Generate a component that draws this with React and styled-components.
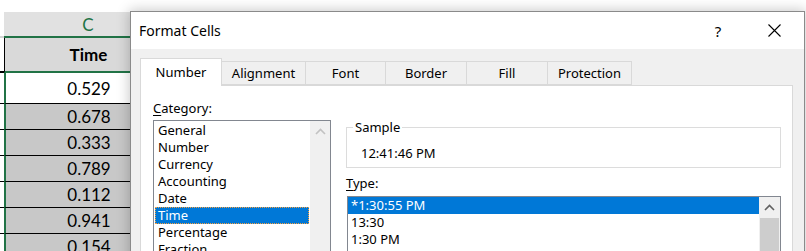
import React from 'react';
import styled, { createGlobalStyle } from 'styled-components';

const GlobalStyle = createGlobalStyle`
  html, body {
    margin: 0;
    padding: 0;
    background: #fff;
    overflow: hidden;
  }
`;

const UI_FONT = `"Noto Sans", "Open Sans", sans-serif`;
const SHEET_FONT = `Lato, "Open Sans", sans-serif`;
const GREEN = '#217346';

// Whole window: sheet on the left, dialog over the rest
const Screen = styled.div`
  display: flex;
  align-items: flex-start;
  width: 806px;
  height: 251px;
  overflow: hidden;
`;

//// Spreadsheet part
const Sheet = styled.div`
  width: 130px;
  flex-shrink: 0;
  overflow: hidden;
  padding-top: 12px;
`;

const SheetRow = styled.div`
  display: grid;
  grid-template-columns: 4px 168px;
  height: ${p => p.$h}px;
`;

const Stub = styled.div`
  background: #fff;
  box-sizing: border-box;
  border-bottom: ${p => p.$line};
`;

const Cell = styled.div`
  box-sizing: border-box;
  display: flex;
  align-items: center;
  justify-content: center;
  background: ${p => p.$bg};
  border-left: ${p => p.$left || 'none'};
  border-bottom: ${p => p.$line};
  color: ${p => p.$color || '#000'};
  font-family: ${SHEET_FONT};
  font-size: 17px;
  font-weight: ${p => (p.$bold ? 700 : 400)};
`;

const values = ['0.529', '0.678', '0.333', '0.789', '0.112', '0.941', '0.154'];

const SheetColumn = () => (
  <Sheet>
    <SheetRow $h={26}>
      <Stub $line="2px solid #d4d4d4" />
      <Cell $bg="#e1e1e1" $line={`2px solid ${GREEN}`} $color={GREEN}>C</Cell>
    </SheetRow>
    <SheetRow $h={35}>
      <Stub $line="2px solid #000" />
      <Cell $bg="#d9d9d9" $left="1px solid #000" $line={`2px solid ${GREEN}`} $bold>Time</Cell>
    </SheetRow>
    {values.map((v, i) => (
      <SheetRow key={v} $h={i === 0 ? 31 : 26}>
        <Stub $line="1px solid #000" />
        <Cell
          $bg={i === 0 ? '#fff' : '#c8c8c8'}
          $left={`2px solid ${GREEN}`}
          $line="1px solid #000"
        >
          {v}
        </Cell>
      </SheetRow>
    ))}
  </Sheet>
);

//// Dialog part
const Dialog = styled.div`
  width: 675px;
  height: 260px;
  flex-shrink: 0;
  box-sizing: border-box;
  margin-top: 11px;
  border: 1px solid #8a8a8a;
  background: #f0f0f0;
  box-shadow: 0 0 12px 1px rgba(0, 0, 0, 0.22);
  font-family: ${UI_FONT};
  color: #000;
`;

const TitleBar = styled.div`
  display: flex;
  align-items: center;
  height: 37px;
  padding: 0 6px 0 8px;
  background: #fff;
`;

const Title = styled.div`
  flex: 1;
  font-size: 14px;
`;

const TitleButton = styled.div`
  display: flex;
  align-items: center;
  justify-content: center;
  width: ${p => p.$w}px;
  height: 37px;
  margin-right: ${p => p.$mr || 0}px;
  font-size: 15px;
`;

const Body = styled.div`
  padding: 9px 11px 0 9px;
`;

const TabStrip = styled.div`
  display: flex;
  align-items: flex-end;
  height: 28px;
  margin-bottom: -1px;
  position: relative;
  z-index: 1;
`;

const Tab = styled.div`
  box-sizing: border-box;
  display: flex;
  align-items: center;
  justify-content: center;
  width: ${p => p.$w}px;
  height: ${p => (p.$active ? 28 : 24)}px;
  margin-left: ${p => (p.$first ? 0 : -1)}px;
  margin-bottom: ${p => (p.$active ? 0 : 1)}px;
  padding-bottom: ${p => (p.$active ? 1 : 0)}px;
  border: 1px solid #d9d9d9;
  border-bottom: ${p => (p.$active ? 'none' : '1px solid #d9d9d9')};
  background: ${p => (p.$active ? '#fff' : '#f0f0f0')};
  font-size: 13px;
  position: relative;
  z-index: ${p => (p.$active ? 2 : 1)};
`;

const Panel = styled.div`
  display: grid;
  grid-template-columns: 178px 435px;
  column-gap: 15px;
  height: 200px;
  padding: 14px 0 0 12px;
  background: #fff;
  border: 1px solid #d9d9d9;
`;

const Column = styled.div`
  display: flex;
  flex-direction: column;
  align-items: flex-start;
`;

const Label = styled.div`
  font-size: 13px;
  line-height: 17px;
  margin-top: ${p => p.$mt || 0}px;

  u {
    text-decoration-thickness: 1px;
    text-underline-offset: 2px;
  }
`;

const ListBox = styled.div`
  display: flex;
  box-sizing: border-box;
  width: ${p => p.$w}px;
  height: 140px;
  margin: ${p => p.$m};
  border: 1px solid #828790;
  background: #fff;
`;

const Items = styled.div`
  flex: 1;
  padding: ${p => p.$pad};
`;

const Item = styled.div`
  box-sizing: border-box;
  height: 17px;
  line-height: 17px;
  padding-left: ${p => p.$indent}px;
  font-size: 13px;
  white-space: nowrap;
  background: ${p => (p.$selected ? '#0078d7' : 'transparent')};
  color: ${p => (p.$selected ? '#fff' : '#000')};
  outline: ${p => (p.$focus ? '1px dotted #f5a040' : 'none')};
  outline-offset: -1px;
`;

const ScrollBar = styled.div`
  display: flex;
  flex-direction: column;
  width: ${p => p.$w}px;
  background: #f0f0f0;
`;

const ScrollButton = styled.div`
  display: flex;
  align-items: center;
  justify-content: center;
  height: ${p => p.$h}px;
`;

const Thumb = styled.div`
  flex: 1;
  margin: 0 1px;
  background: #cdcdcd;
`;

const SampleBox = styled.fieldset`
  box-sizing: border-box;
  width: 435px;
  margin: 19px 0 0 0;
  padding: 9px 0 5px 6px;
  border: 1px solid #dcdcdc;

  legend {
    padding: 0 2px;
    font-size: 13px;
    line-height: 17px;
  }
`;

const SampleValue = styled.div`
  padding-left: 8px;
  font-size: 13px;
  line-height: 17px;
`;

const Chevron = ({ color }) => (
  <svg width="11" height="7" viewBox="0 0 11 7">
    <polyline points="1,6 5.5,1.5 10,6" fill="none" stroke={color} strokeWidth="1.6" />
  </svg>
);

const CloseIcon = () => (
  <svg width="13" height="13" viewBox="0 0 13 13">
    <path d="M0.5 0.5 L12.5 12.5 M12.5 0.5 L0.5 12.5" stroke="#000" strokeWidth="1.1" />
  </svg>
);

const tabs = [
  { name: 'Number', w: 82 },
  { name: 'Alignment', w: 85 },
  { name: 'Font', w: 81 },
  { name: 'Border', w: 82 },
  { name: 'Fill', w: 82 },
  { name: 'Protection', w: 85 },
];

const categories = ['General', 'Number', 'Currency', 'Accounting', 'Date', 'Time', 'Percentage', 'Fraction'];
const types = ['*1:30:55 PM', '13:30', '1:30 PM'];

const FormatCells = () => (
  <Dialog>
    <TitleBar>
      <Title>Format Cells</Title>
      <TitleButton $w={32} $mr={16}>?</TitleButton>
      <TitleButton $w={48}><CloseIcon /></TitleButton>
    </TitleBar>
    <Body>
      <TabStrip>
        {tabs.map((t, i) => (
          <Tab key={t.name} $w={t.w} $first={i === 0} $active={i === 0}>{t.name}</Tab>
        ))}
      </TabStrip>
      <Panel>
        <Column>
          <Label><u>C</u>ategory:</Label>
          <ListBox $w={178} $m="3px 0 0 0">
            <Items $pad="1px">
              {categories.map(c => (
                <Item key={c} $indent={3} $selected={c === 'Time'} $focus={c === 'Time'}>{c}</Item>
              ))}
            </Items>
            <ScrollBar $w={20}>
              <ScrollButton $h={21}><Chevron color="#c2c2c2" /></ScrollButton>
            </ScrollBar>
          </ListBox>
        </Column>
        <Column>
          <SampleBox>
            <legend>Sample</legend>
            <SampleValue>12:41:46 PM</SampleValue>
          </SampleBox>
          <Label $mt={7}><u>T</u>ype:</Label>
          <ListBox $w={434} $m="4px 0 0 1px">
            <Items $pad="0">
              {types.map((t, i) => (
                <Item key={t} $indent={3} $selected={i === 0}>{t}</Item>
              ))}
            </Items>
            <ScrollBar $w={21}>
              <ScrollButton $h={21}><Chevron color="#606060" /></ScrollButton>
              <Thumb />
            </ScrollBar>
          </ListBox>
        </Column>
      </Panel>
    </Body>
  </Dialog>
);

const App = () => (
  <>
    <GlobalStyle />
    <Screen>
      <SheetColumn />
      <FormatCells />
    </Screen>
  </>
);

export default App;
